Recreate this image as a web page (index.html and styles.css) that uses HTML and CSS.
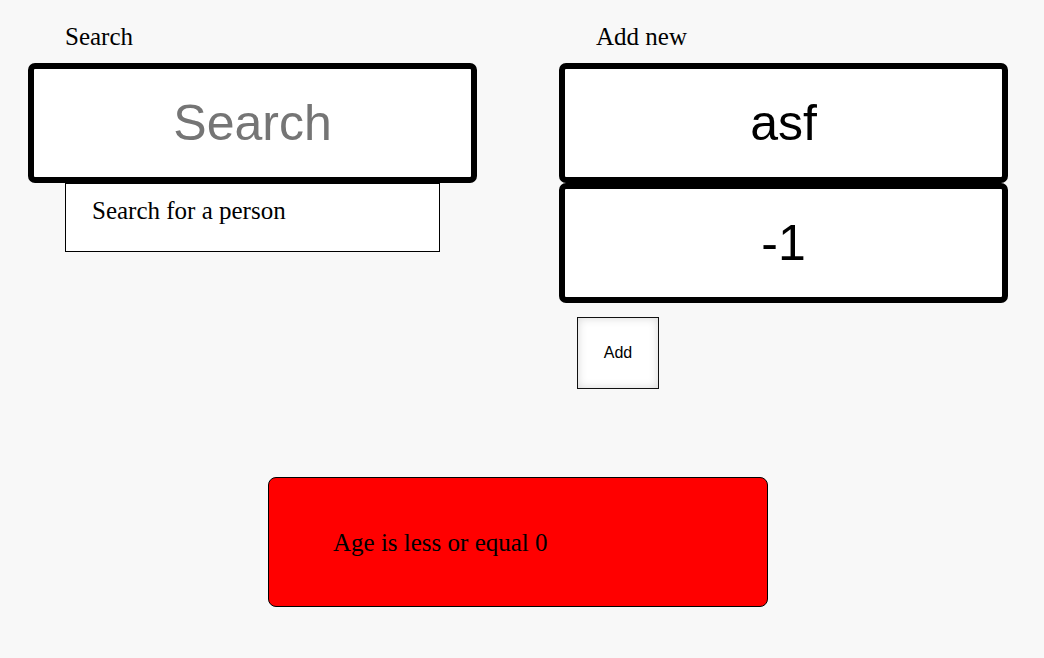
FILE: index.html
```html
<!DOCTYPE html>
<html>
<head>
<meta charset="utf-8">
<link rel="stylesheet" href="styles.css">
</head>
<body>
<main class="page">
  <div class="columns">
    <section class="col">
      <label class="col-label">Search</label>
      <input class="big-input" type="text" placeholder="Search">
      <div class="dropdown">Search for a person</div>
    </section>
    <section class="col">
      <label class="col-label">Add new</label>
      <input class="big-input" type="text" value="asf">
      <input class="big-input" type="text" value="-1">
      <button class="add-btn">Add</button>
    </section>
  </div>
  <div class="error">Age is less or equal 0</div>
</main>
</body>
</html>
```

FILE: styles.css
```css
html, body {
  margin: 0;
  padding: 0;
  background: #f8f8f8;
}

.page {
  padding: 22px 0 0 65px;
  font-family: "Liberation Serif", "Times New Roman", serif;
  font-size: 25px;
  line-height: 29px;
  color: #000;
}

.columns {
  display: flex;
  gap: 156px;
}

.col {
  width: 375px;
  display: flex;
  flex-direction: column;
  align-items: flex-start;
}

.col-label {
  display: block;
  margin-bottom: 12px;
}

.big-input {
  box-sizing: border-box;
  width: 449px;
  height: 120px;
  margin: 0 0 0 -37px;
  padding: 0 10px;
  border: 6px solid #000;
  border-radius: 7px;
  background: #fff;
  font-family: "Liberation Sans", Arial, sans-serif;
  font-size: 50px;
  color: #000;
  text-align: center;
  outline: none;
}

.big-input::placeholder {
  color: #757575;
}

.dropdown {
  box-sizing: border-box;
  width: 375px;
  height: 69px;
  padding: 12px 26px;
  border: 1px solid #000;
  background: #fff;
}

.add-btn {
  box-sizing: border-box;
  width: 82px;
  height: 72px;
  margin: 14px 0 0 -19px;
  border: 1px solid #111;
  background: #fff;
  box-shadow: inset 0 0 10px rgba(0, 0, 0, 0.16);
  font-family: "Liberation Sans", Arial, sans-serif;
  font-size: 16px;
  color: #000;
  padding: 0;
}

.error {
  box-sizing: border-box;
  width: 500px;
  height: 130px;
  margin: 88px 0 0 203px;
  padding: 0 0 0 64px;
  display: flex;
  align-items: center;
  border: 1px solid #000;
  border-radius: 8px;
  background: #ff0000;
}
```
